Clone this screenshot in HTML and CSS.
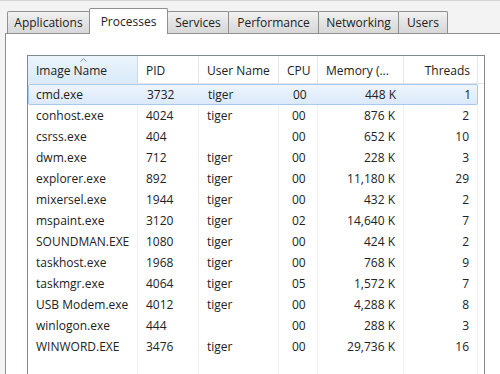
FILE: index.html
```html
<!DOCTYPE html>
<html>
<head>
<meta charset="utf-8">
<link rel="stylesheet" href="styles.css">
</head>
<body>
<div class="window">
  <div class="tabs">
    <div class="tab t-app">Applications</div>
    <div class="tab t-proc active">Processes</div>
    <div class="tab t-serv">Services</div>
    <div class="tab t-perf">Performance</div>
    <div class="tab t-net">Networking</div>
    <div class="tab t-users">Users</div>
  </div>
  <div class="panel">
    <div class="list">
      <div class="header">
        <div class="hcell sorted"><span class="sort-arrow"><svg width="7" height="4" viewBox="0 0 7 4"><path d="M0.5 3.5 L3.5 0.5 L6.5 3.5" fill="none" stroke="#7c8ea5" stroke-width="1"/></svg></span>Image Name</div>
        <div class="hcell">PID</div>
        <div class="hcell">User Name</div>
        <div class="hcell">CPU</div>
        <div class="hcell">Memory (...</div>
        <div class="hcell right">Threads</div>
        <div class="hfill"></div>
      </div>
      <div class="rows">
        <div class="row selected"><span>cmd.exe</span><span>3732</span><span>tiger</span><span class="cpu">00</span><span class="num">448 K</span><span class="num">1</span></div>
        <div class="row"><span>conhost.exe</span><span>4024</span><span>tiger</span><span class="cpu">00</span><span class="num">876 K</span><span class="num">2</span></div>
        <div class="row"><span>csrss.exe</span><span>404</span><span></span><span class="cpu">00</span><span class="num">652 K</span><span class="num">10</span></div>
        <div class="row"><span>dwm.exe</span><span>712</span><span>tiger</span><span class="cpu">00</span><span class="num">228 K</span><span class="num">3</span></div>
        <div class="row"><span>explorer.exe</span><span>892</span><span>tiger</span><span class="cpu">00</span><span class="num">11,180 K</span><span class="num">29</span></div>
        <div class="row"><span>mixersel.exe</span><span>1944</span><span>tiger</span><span class="cpu">00</span><span class="num">432 K</span><span class="num">2</span></div>
        <div class="row"><span>mspaint.exe</span><span>3120</span><span>tiger</span><span class="cpu">02</span><span class="num">14,640 K</span><span class="num">7</span></div>
        <div class="row"><span>SOUNDMAN.EXE</span><span>1080</span><span>tiger</span><span class="cpu">00</span><span class="num">424 K</span><span class="num">2</span></div>
        <div class="row"><span>taskhost.exe</span><span>1968</span><span>tiger</span><span class="cpu">00</span><span class="num">768 K</span><span class="num">9</span></div>
        <div class="row"><span>taskmgr.exe</span><span>4064</span><span>tiger</span><span class="cpu">05</span><span class="num">1,572 K</span><span class="num">7</span></div>
        <div class="row"><span>USB Modem.exe</span><span>4012</span><span>tiger</span><span class="cpu">00</span><span class="num">4,288 K</span><span class="num">8</span></div>
        <div class="row"><span>winlogon.exe</span><span>444</span><span></span><span class="cpu">00</span><span class="num">288 K</span><span class="num">3</span></div>
        <div class="row"><span>WINWORD.EXE</span><span>3476</span><span>tiger</span><span class="cpu">00</span><span class="num">29,736 K</span><span class="num">16</span></div>
      </div>
    </div>
  </div>
</div>
</body>
</html>
```

FILE: styles.css
```css
* { box-sizing: border-box; }
html, body { margin: 0; padding: 0; }
body {
  width: 500px;
  height: 374px;
  overflow: hidden;
  background: #f3f3f3;
  font-family: "Open Sans", "Noto Sans", sans-serif;
  font-size: 12px;
  color: #222222;
}
.window {
  display: flex;
  flex-direction: column;
  height: 374px;
  overflow: hidden;
}
.tabs {
  flex-shrink: 0;
  display: flex;
  align-items: flex-end;
  padding-left: 7px;
  height: 33px;
  border-top: 1px solid #d4d4d4;
}
.tab {
  flex-shrink: 0;
  height: 22px;
  margin-left: -1px;
  border: 1px solid #8e8f8f;
  border-bottom: none;
  border-radius: 2px 2px 0 0;
  background: linear-gradient(#f2f2f2, #e3e3e3 50%, #d8d8d8);
  text-align: center;
  line-height: 22px;
  white-space: nowrap;
}
.t-app { width: 83px; margin-left: 0; }
.t-proc { width: 79px; }
.t-serv { width: 62px; }
.t-perf { width: 91px; }
.t-net { width: 81px; }
.t-users { width: 50px; }
.tab.active {
  height: 26px;
  margin-bottom: -1px;
  background: #ffffff;
  line-height: 25px;
  position: relative;
  z-index: 1;
}
.panel {
  flex: 1;
  min-height: 0;
  overflow: hidden;
  margin-left: 5px;
  background: #ffffff;
  border-top: 1px solid #8e8f8f;
  border-left: 1px solid #8e8f8f;
  padding: 21px 0 0 21px;
}
.list {
  width: 458px;
  height: 400px;
  border: 1px solid #828790;
  border-bottom: none;
  background: #ffffff;
}
.header {
  display: grid;
  grid-template-columns: 110px 61px 80px 39px 86px 74px 1fr;
  height: 28px;
  border-bottom: 1px solid #e1e6ec;
}
.hcell {
  border-right: 1px solid #e3e6ea;
  padding-left: 8px;
  line-height: 29px;
  white-space: nowrap;
  overflow: hidden;
  position: relative;
}
.hcell.sorted {
  background: linear-gradient(#eaf4fc, #d9eaf8);
  border-right-color: #c9dcef;
}
.hcell.right {
  text-align: right;
  padding-right: 7px;
}
.sort-arrow {
  position: absolute;
  left: 52px;
  top: 2px;
  line-height: 0;
}
.rows {
  display: flex;
  flex-direction: column;
  background:
    linear-gradient(90deg,
      transparent 109px, #eef1f4 109px, #eef1f4 110px,
      transparent 110px, transparent 170px, #eef1f4 170px, #eef1f4 171px,
      transparent 171px, transparent 250px, #eef1f4 250px, #eef1f4 251px,
      transparent 251px, transparent 289px, #eef1f4 289px, #eef1f4 290px,
      transparent 290px, transparent 375px, #eef1f4 375px, #eef1f4 376px,
      transparent 376px, transparent 449px, #eef1f4 449px, #eef1f4 450px,
      transparent 450px);
  height: 400px;
}
.row {
  display: grid;
  grid-template-columns: 110px 61px 80px 39px 86px 74px;
  flex-shrink: 0;
  height: 21px;
  line-height: 21px;
  width: 450px;
  white-space: nowrap;
}
.row span { padding-left: 8px; }
.row .cpu { padding-left: 13px; }
.row .num { text-align: right; padding-right: 9px; padding-left: 0; }
.row.selected {
  background: linear-gradient(#eef5fd, #dbe9fb);
  border: 1px solid #a9c8ee;
  border-radius: 2px;
  line-height: 19px;
}
.row.selected span:first-child { padding-left: 7px; }
.row.selected span:last-child { padding-right: 8px; }
```
